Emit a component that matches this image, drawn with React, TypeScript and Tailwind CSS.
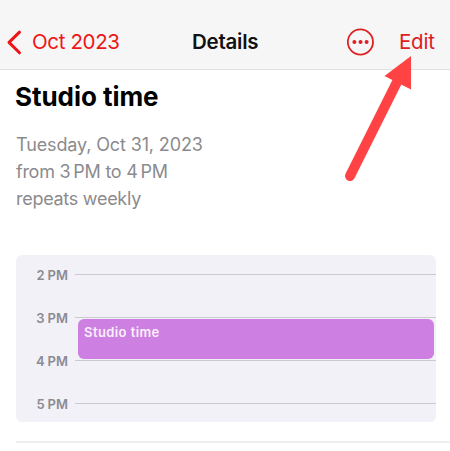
const hours = ['2', '3', '4', '5'];

function NavBar() {
  return (
    <header className="flex h-[70px] items-start border-b border-[#e2e2e2] bg-[#f6f6f6] pt-[28px] text-[20.5px] leading-[28px]">
      <div className="flex w-[192px] items-center text-[#ee1518]">
        <svg className="ml-[6px] h-[26px] w-[18px]" viewBox="0 0 18 26" fill="none" stroke="currentColor" strokeWidth="3" strokeLinecap="round" strokeLinejoin="round">
          <path d="M13.5 3.2 3 13.4l10.5 10.4" />
        </svg>
        <span className="ml-[8px] whitespace-nowrap tracking-[-0.35px]">Oct 2023</span>
      </div>
      <h1 className="w-[155px] whitespace-nowrap font-semibold tracking-[-0.25px] text-[#111]">Details</h1>
      <svg className="h-[28px] w-[28px] text-[#df2023]" viewBox="0 0 28 28" fill="none">
        <circle cx="13.4" cy="14" r="12.6" stroke="currentColor" strokeWidth="1.8" />
        <g fill="currentColor">
          <circle cx="7.4" cy="14" r="2" />
          <circle cx="13.5" cy="14" r="2" />
          <circle cx="19.6" cy="14" r="2" />
        </g>
      </svg>
      <span className="ml-[24px] tracking-[-0.2px] text-[#df2023]">Edit</span>
    </header>
  );
}

function HourRow({ hour }: { hour: string }) {
  return (
    <div className="flex h-[43px] items-center">
      <div className="flex w-[52px] justify-end gap-[3px] text-[13px] font-semibold leading-[16px] text-[#8b8b91]">
        <span>{hour}</span>
        <span>PM</span>
      </div>
      <div className="ml-[7px] h-px flex-1 bg-[#cbcad0]" />
    </div>
  );
}

export default function App() {
  return (
    <main className="relative h-[451px] w-[450px] overflow-hidden bg-white font-['Inter','Liberation_Sans',sans-serif]">
      <NavBar />
      <section className="pl-[16px]">
        <h2 className="-ml-px pt-[10px] text-[26px] font-bold leading-[34px] tracking-[-0.05px] text-black">Studio time</h2>
        <div className="mt-[17px] text-[18px] leading-[27px] text-[#8b8b8e]">
          <p className="tracking-[-0.13px]">Tuesday, Oct 31, 2023</p>
          <p className="tracking-[-0.26px]">from 3<span className="ml-[3px]">PM</span> to 4<span className="ml-[3px]">PM</span></p>
          <p className="tracking-[-0.28px]">repeats weekly</p>
        </div>
        <div className="relative mt-[43px] h-[167px] w-[420px] rounded-[6px] bg-[#f2f1f7]">
          <div className="-translate-y-[2px]">
            {hours.map((hour) => (
              <HourRow key={hour} hour={hour} />
            ))}
          </div>
          <div className="absolute left-[62px] top-[64px] h-[40px] w-[356px] rounded-[6px] bg-[#ce80e2] pl-[6px] pt-[4px] text-[13px] font-semibold leading-[18px] tracking-[0.42px] text-[#f9effb]">
            Studio time
          </div>
        </div>
        <div className="mt-[19px] h-[2px] bg-[#eeeeef]" />
      </section>
      <svg className="absolute left-[340px] top-[50px] h-[136px] w-[80px]" viewBox="340 50 80 136">
        <path d="M350 176 398 80" stroke="#ff4244" strokeWidth="10" strokeLinecap="round" />
        <path d="M411 56v33.5L384.5 76Z" fill="#ff4244" />
      </svg>
    </main>
  );
}
